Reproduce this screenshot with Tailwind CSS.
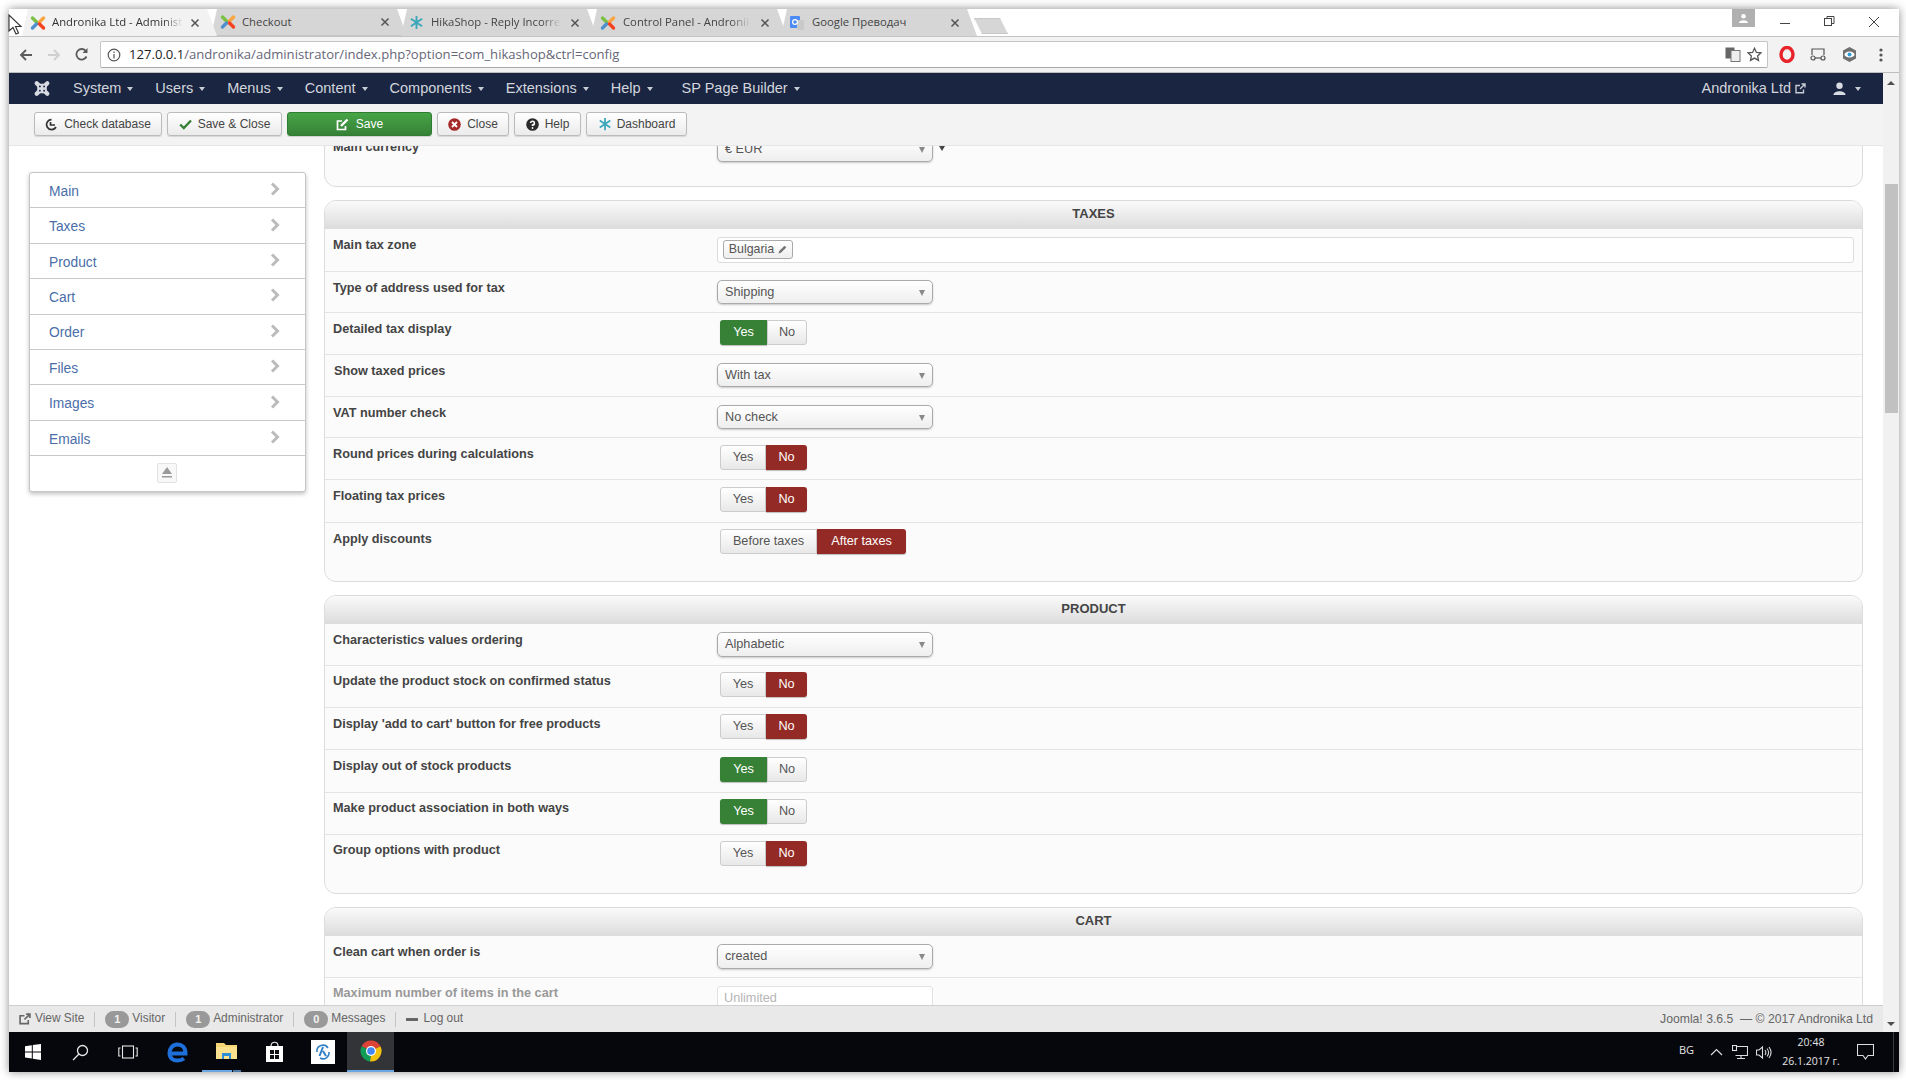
<!DOCTYPE html>
<html lang="en">
  <head>
    <meta charset="UTF-8" />
    <title>Andronika Ltd - Administration</title>
    <script src="https://cdn.jsdelivr.net/npm/@tailwindcss/browser@4"></script>
  </head>
  <body class="bg-white w-[1906px] h-[1080px] overflow-hidden font-['Liberation_Sans',Arial,sans-serif] text-[#333]">
    <svg class="hidden">
      <symbol id="joomla" viewBox="0 0 16 16">
        <path d="M2.5 3 L6.5 7" stroke="#7ac143" stroke-width="3.4" stroke-linecap="round" fill="none" />
        <path d="M13.5 3 L9.5 7" stroke="#f9a541" stroke-width="3.4" stroke-linecap="round" fill="none" />
        <path d="M2.5 13 L6.5 9" stroke="#5091cd" stroke-width="3.4" stroke-linecap="round" fill="none" />
        <path d="M13.5 13 L9.5 9" stroke="#f44321" stroke-width="3.4" stroke-linecap="round" fill="none" />
      </symbol>
      <symbol id="hika" viewBox="0 0 16 16">
        <path d="M8 1 V15 M2 4 L14 12 M14 4 L2 12" stroke="#3aa6b9" stroke-width="2" fill="none" />
      </symbol>
      <symbol id="chev" viewBox="0 0 10 14">
        <path d="M2 1.5 L7.5 7 L2 12.5" stroke="#bbb" stroke-width="3" fill="none" />
      </symbol>
      <symbol id="x" viewBox="0 0 10 10">
        <path d="M1.5 1.5 L8.5 8.5 M8.5 1.5 L1.5 8.5" stroke="#555" stroke-width="1.5" fill="none" />
      </symbol>
    </svg>

    <!-- mouse cursor -->
    <svg class="absolute left-[8px] top-[14px] z-20" width="15" height="21" viewBox="0 0 15 21">
      <path d="M1 1 V17 L5 13.5 L8 20 L10.5 19 L7.5 12.5 H13 Z" fill="#fff" stroke="#333" stroke-width="1.1" />
    </svg>

    <div class="absolute left-[9px] top-[9px] w-[1890px] h-[1063px] flex flex-col bg-white shadow-[0_0_9px_rgba(0,0,0,0.45)]">
      <!-- tab strip -->
      <div class="h-[28px] shrink-0 flex items-stretch relative border-b border-[#c4c4c4] text-[11.3px] font-['Open_Sans',sans-serif] text-[#444]">
        <div class="flex pl-[13px] items-stretch">
          <div class="relative z-10 w-[195px] bg-[#f2f2f2] flex items-center pl-[8px] pr-[17px] gap-[6px] [clip-path:polygon(6px_0,185px_0,195px_100%,0_100%)]">
            <svg class="w-[16px] h-[16px] shrink-0"><use href="#joomla" /></svg>
            <span class="w-[131px] overflow-hidden whitespace-nowrap text-[#333] [mask-image:linear-gradient(to_right,#000_85%,transparent)]">Andronika Ltd - Administration</span>
            <svg class="w-[10px] h-[10px] ml-auto shrink-0"><use href="#x" /></svg>
          </div>
          <div class="-ml-[6px] w-[196px] bg-[#d6d6d6] flex items-center pl-[9px] pr-[17px] gap-[6px] border-b border-[#c4c4c4] [clip-path:polygon(6px_0,186px_0,196px_100%,0_100%)]">
            <svg class="w-[16px] h-[16px] shrink-0"><use href="#joomla" /></svg>
            <span class="overflow-hidden whitespace-nowrap">Checkout</span>
            <svg class="w-[10px] h-[10px] ml-auto shrink-0"><use href="#x" /></svg>
          </div>
          <div class="-ml-[6px] w-[196px] bg-[#d6d6d6] flex items-center pl-[8px] pr-[17px] gap-[7px] [clip-path:polygon(6px_0,186px_0,196px_100%,0_100%)]">
            <svg class="w-[15px] h-[15px] shrink-0"><use href="#hika" /></svg>
            <span class="w-[130px] overflow-hidden whitespace-nowrap [mask-image:linear-gradient(to_right,#000_85%,transparent)]">HikaShop - Reply Incorrect</span>
            <svg class="w-[10px] h-[10px] ml-auto shrink-0"><use href="#x" /></svg>
          </div>
          <div class="-ml-[6px] w-[196px] bg-[#d6d6d6] flex items-center pl-[9px] pr-[17px] gap-[7px] [clip-path:polygon(6px_0,186px_0,196px_100%,0_100%)]">
            <svg class="w-[16px] h-[16px] shrink-0"><use href="#joomla" /></svg>
            <span class="w-[127px] overflow-hidden whitespace-nowrap [mask-image:linear-gradient(to_right,#000_85%,transparent)]">Control Panel - Andronika</span>
            <svg class="w-[10px] h-[10px] ml-auto shrink-0"><use href="#x" /></svg>
          </div>
          <div class="-ml-[6px] w-[196px] bg-[#d6d6d6] flex items-center pl-[8px] pr-[17px] gap-[7px] [clip-path:polygon(6px_0,186px_0,196px_100%,0_100%)]">
            <svg class="w-[16px] h-[16px] shrink-0" viewBox="0 0 16 16">
              <rect x="1" y="1" width="10" height="12" rx="1" fill="#4c8bf5" />
              <rect x="8" y="5" width="7" height="10" rx="1" fill="#c9c9c9" />
              <circle cx="6" cy="7" r="2.4" fill="none" stroke="#fff" stroke-width="1.2" />
            </svg>
            <span class="overflow-hidden whitespace-nowrap">Google Преводач</span>
            <svg class="w-[10px] h-[10px] ml-auto shrink-0"><use href="#x" /></svg>
          </div>
          <div class="-ml-[3px] mt-[9px] w-[34px] h-[16px] bg-[#d6d6d6] border border-[#c8c8c8] [clip-path:polygon(0_0,26px_0,34px_100%,8px_100%)]"></div>
        </div>
        <div class="ml-auto flex items-start mr-[2px]">
          <div class="w-[23px] h-[18px] bg-[#b0b0b0] mr-[7px] flex items-center justify-center">
            <svg width="11" height="11" viewBox="0 0 12 12"><circle cx="6" cy="3.5" r="2.5" fill="#fff" /><path d="M1 11 C1 7 11 7 11 11 Z" fill="#fff" /></svg>
          </div>
          <div class="flex items-center h-[26px]">
            <svg class="w-[45px]" height="12" viewBox="0 0 45 12"><path d="M18 7.5 H28" stroke="#444" stroke-width="1" /></svg>
            <svg class="w-[45px]" height="12" viewBox="0 0 45 12" fill="none" stroke="#444"><rect x="17.5" y="2.5" width="7" height="7" /><path d="M20 2.5 V0.5 H27 V7.5 H24.5" /></svg>
            <svg class="w-[45px]" height="12" viewBox="0 0 45 12"><path d="M17 1 L27 11 M27 1 L17 11" stroke="#444" stroke-width="1" /></svg>
          </div>
        </div>
      </div>

      <!-- address bar -->
      <div class="h-[36px] shrink-0 bg-[#f2f2f2] flex items-start border-b border-[#bdbdbd] pt-[4px]">
        <div class="w-[91px] h-[27px] flex items-center shrink-0">
          <svg class="ml-[10px]" width="14" height="14" viewBox="0 0 14 14" fill="none" stroke="#5a5a5a" stroke-width="1.8"><path d="M13 7 H2 M7 2 L2 7 L7 12" /></svg>
          <svg class="ml-[14px]" width="14" height="14" viewBox="0 0 14 14" fill="none" stroke="#cfcfcf" stroke-width="1.8"><path d="M1 7 H12 M7 2 L12 7 L7 12" /></svg>
          <svg class="ml-[13px]" width="15" height="15" viewBox="0 0 15 15" fill="none" stroke="#5a5a5a" stroke-width="1.8"><path d="M12.5 9.5 A5.3 5.3 0 1 1 12 4.2" /><path d="M13.5 1 V6 H8.5 Z" fill="#5a5a5a" stroke="none" /></svg>
        </div>
        <div class="w-[1668px] h-[27px] bg-white border border-[#c4c4c4] border-b-[#a9a9a9] rounded-[2px] flex items-center shrink-0">
          <svg class="ml-[6px]" width="14" height="14" viewBox="0 0 14 14" fill="none" stroke="#555" stroke-width="1.2"><circle cx="7" cy="7" r="5.8" /><path d="M7 6 V10.5 M7 3.4 V5" /></svg>
          <span class="ml-[8px] text-[13.1px] font-['Open_Sans',sans-serif] text-[#667] whitespace-nowrap"><span class="text-[#222]">127.0.0.1</span>/andronika/administrator/index.php?option=com_hikashop&amp;ctrl=config</span>
          <svg class="ml-auto" width="16" height="15" viewBox="0 0 16 15"><rect x="0.5" y="0.5" width="9" height="11" fill="#666" /><rect x="6" y="3.5" width="9" height="11" fill="#eee" stroke="#777" /></svg>
          <svg class="ml-[6px] mr-[5px]" width="15" height="15" viewBox="0 0 15 15" fill="none" stroke="#555" stroke-width="1.3"><path d="M7.5 1.3 L9.4 5.4 L13.9 5.9 L10.6 8.9 L11.5 13.4 L7.5 11.1 L3.5 13.4 L4.4 8.9 L1.1 5.9 L5.6 5.4 Z" /></svg>
        </div>
        <div class="flex-1 h-[27px] flex items-center">
          <svg class="ml-[11px]" width="16" height="17" viewBox="0 0 16 17"><ellipse cx="8" cy="8.5" rx="6" ry="7" fill="none" stroke="#e8232a" stroke-width="3.4" /></svg>
          <svg class="ml-[15px]" width="16" height="13" viewBox="0 0 16 13" fill="none" stroke="#555" stroke-width="1.2"><path d="M2 7 V1 H14 V7" /><circle cx="3" cy="10" r="2" /><circle cx="13" cy="10" r="2" /><path d="M5 10 H11" /></svg>
          <svg class="ml-[15px]" width="17" height="17" viewBox="0 0 17 17"><path d="M8.5 1 L15 4.5 V12.5 L8.5 16 L2 12.5 V4.5 Z" fill="#6f6f6f" /><ellipse cx="8.5" cy="8.5" rx="5" ry="3" fill="#fff" /><circle cx="8.5" cy="8.5" r="2" fill="#2d9cdb" /></svg>
          <svg class="ml-[21px]" width="4" height="14" viewBox="0 0 4 14" fill="#555"><circle cx="2" cy="2" r="1.6" /><circle cx="2" cy="7" r="1.6" /><circle cx="2" cy="12" r="1.6" /></svg>
        </div>
      </div>

      <div class="flex-1 min-h-0 flex">
        <div class="flex-1 min-w-0 flex flex-col">
          <!-- joomla nav -->
          <nav class="h-[31px] shrink-0 bg-[#1a2542] text-[#d2d5dc] text-[14.5px] flex items-center pr-[22px] whitespace-nowrap">
            <svg class="ml-[24px] mr-[22px]" width="18" height="17" viewBox="0 0 16 16">
              <path d="M3 3 L13 13 M13 3 L3 13" stroke="#d8dbe2" stroke-width="4" stroke-linecap="round" fill="none" />
              <rect x="3.5" y="3.5" width="9" height="9" fill="#d8dbe2" />
              <circle cx="6" cy="6" r="0.9" fill="#1a2542" /><circle cx="10" cy="6" r="0.9" fill="#1a2542" /><circle cx="6" cy="10" r="0.9" fill="#1a2542" /><circle cx="10" cy="10" r="0.9" fill="#1a2542" />
            </svg>
            <div class="flex items-center gap-[22px]">
              <span class="flex items-center gap-[6px]">System<i class="w-0 h-0 border-x-[3.5px] border-t-[4px] border-x-transparent border-t-[#c8ccd4]"></i></span>
              <span class="flex items-center gap-[6px]">Users<i class="w-0 h-0 border-x-[3.5px] border-t-[4px] border-x-transparent border-t-[#c8ccd4]"></i></span>
              <span class="flex items-center gap-[6px]">Menus<i class="w-0 h-0 border-x-[3.5px] border-t-[4px] border-x-transparent border-t-[#c8ccd4]"></i></span>
              <span class="flex items-center gap-[6px]">Content<i class="w-0 h-0 border-x-[3.5px] border-t-[4px] border-x-transparent border-t-[#c8ccd4]"></i></span>
              <span class="flex items-center gap-[6px]">Components<i class="w-0 h-0 border-x-[3.5px] border-t-[4px] border-x-transparent border-t-[#c8ccd4]"></i></span>
              <span class="flex items-center gap-[6px]">Extensions<i class="w-0 h-0 border-x-[3.5px] border-t-[4px] border-x-transparent border-t-[#c8ccd4]"></i></span>
              <span class="flex items-center gap-[6px]">Help<i class="w-0 h-0 border-x-[3.5px] border-t-[4px] border-x-transparent border-t-[#c8ccd4]"></i></span>
              <span class="ml-[7px] flex items-center gap-[6px]">SP Page Builder<i class="w-0 h-0 border-x-[3.5px] border-t-[4px] border-x-transparent border-t-[#c8ccd4]"></i></span>
            </div>
            <span class="ml-auto">Andronika Ltd</span>
            <svg class="ml-[4px]" width="11" height="11" viewBox="0 0 11 11" fill="none" stroke="#c8ccd4" stroke-width="1.4"><path d="M8.5 6.5 V9.8 H1 V2.5 H5 M5 6 L10 1 M6.5 1 H10 V4.5" /></svg>
            <svg class="ml-[27px]" width="13" height="13" viewBox="0 0 13 13" fill="#d8dbe2"><circle cx="6.5" cy="3.8" r="3.2" /><path d="M0.5 13 C0.5 8 12.5 8 12.5 13 Z" /></svg>
            <i class="ml-[9px] w-0 h-0 border-x-[3.5px] border-t-[4px] border-x-transparent border-t-[#c8ccd4]"></i>
          </nav>

          <!-- toolbar -->
          <div class="h-[42px] shrink-0 bg-[#f3f3f3] border-b border-[#e6e6e6] flex items-start pt-[8px] pl-[25px] gap-[5px] text-[12px] text-[#444]">
            <button class="h-[24px] w-[128px] flex items-center justify-center gap-[6px] rounded-[3px] border border-[#bbb] bg-gradient-to-b from-white to-[#ebebeb] shadow-[0_1px_1px_rgba(0,0,0,0.12)]">
              <svg width="13" height="13" viewBox="0 0 13 13" fill="none" stroke="#333" stroke-width="1.7"><path d="M11 9 A5 5 0 1 1 6.5 1.6" /><path d="M5.5 4 V7 H10" /></svg>Check database
            </button>
            <button class="h-[24px] w-[115px] flex items-center justify-center gap-[6px] rounded-[3px] border border-[#bbb] bg-gradient-to-b from-white to-[#ebebeb] shadow-[0_1px_1px_rgba(0,0,0,0.12)]">
              <svg width="13" height="11" viewBox="0 0 13 11" fill="none" stroke="#378137" stroke-width="2.4"><path d="M1.2 5.5 L4.8 9 L12 1.5" /></svg>Save &amp; Close
            </button>
            <button class="h-[24px] w-[145px] flex items-center justify-center gap-[7px] rounded-[3px] border border-[#2f7d32] bg-gradient-to-b from-[#46a546] to-[#378137] text-white shadow-[0_1px_1px_rgba(0,0,0,0.15)]">
              <svg width="13" height="13" viewBox="0 0 13 13" fill="none" stroke="#fff" stroke-width="1.7"><path d="M9.5 8 V11.5 H1.5 V3 H6" /><path d="M5 8 L11.5 1.5" stroke-width="2.4" /></svg>Save
            </button>
            <button class="h-[24px] w-[72px] flex items-center justify-center gap-[6px] rounded-[3px] border border-[#bbb] bg-gradient-to-b from-white to-[#ebebeb] shadow-[0_1px_1px_rgba(0,0,0,0.12)]">
              <svg width="13" height="13" viewBox="0 0 13 13"><circle cx="6.5" cy="6.5" r="6.3" fill="#a52a2a" /><path d="M4 4 L9 9 M9 4 L4 9" stroke="#fff" stroke-width="1.8" /></svg>Close
            </button>
            <button class="h-[24px] w-[67px] flex items-center justify-center gap-[6px] rounded-[3px] border border-[#bbb] bg-gradient-to-b from-white to-[#ebebeb] shadow-[0_1px_1px_rgba(0,0,0,0.12)]">
              <svg width="13" height="13" viewBox="0 0 13 13"><circle cx="6.5" cy="6.5" r="6.3" fill="#2b2b2b" /><path d="M4.6 5 A1.9 1.9 0 1 1 6.5 7 V8" fill="none" stroke="#fff" stroke-width="1.5" /><circle cx="6.5" cy="10" r="0.9" fill="#fff" /></svg>Help
            </button>
            <button class="h-[24px] w-[101px] flex items-center justify-center gap-[5px] rounded-[3px] border border-[#bbb] bg-gradient-to-b from-white to-[#ebebeb] shadow-[0_1px_1px_rgba(0,0,0,0.12)]">
              <svg class="w-[14px] h-[14px]"><use href="#hika" /></svg>Dashboard
            </button>
          </div>

          <!-- main -->
          <div class="flex-1 min-h-0 overflow-hidden flex pl-[20px] pr-[20px] bg-white">
            <aside class="w-[277px] shrink-0 mt-[26px] self-start bg-white border border-[#c6c6c6] rounded-[3px] shadow-[0_2px_4px_rgba(0,0,0,0.25)] text-[13.8px] text-[#4a6ea8]">
              <div class="h-[35.4px] border-b border-[#c9c9c9] flex items-center pt-[4px] pl-[19px] pr-[25px] justify-between">Main<svg class="w-[10px] h-[14px] -mt-[6px]"><use href="#chev" /></svg></div>
              <div class="h-[35.4px] border-b border-[#c9c9c9] flex items-center pt-[4px] pl-[19px] pr-[25px] justify-between">Taxes<svg class="w-[10px] h-[14px] -mt-[6px]"><use href="#chev" /></svg></div>
              <div class="h-[35.4px] border-b border-[#c9c9c9] flex items-center pt-[4px] pl-[19px] pr-[25px] justify-between">Product<svg class="w-[10px] h-[14px] -mt-[6px]"><use href="#chev" /></svg></div>
              <div class="h-[35.4px] border-b border-[#c9c9c9] flex items-center pt-[4px] pl-[19px] pr-[25px] justify-between">Cart<svg class="w-[10px] h-[14px] -mt-[6px]"><use href="#chev" /></svg></div>
              <div class="h-[35.4px] border-b border-[#c9c9c9] flex items-center pt-[4px] pl-[19px] pr-[25px] justify-between">Order<svg class="w-[10px] h-[14px] -mt-[6px]"><use href="#chev" /></svg></div>
              <div class="h-[35.4px] border-b border-[#c9c9c9] flex items-center pt-[4px] pl-[19px] pr-[25px] justify-between">Files<svg class="w-[10px] h-[14px] -mt-[6px]"><use href="#chev" /></svg></div>
              <div class="h-[35.4px] border-b border-[#c9c9c9] flex items-center pt-[4px] pl-[19px] pr-[25px] justify-between">Images<svg class="w-[10px] h-[14px] -mt-[6px]"><use href="#chev" /></svg></div>
              <div class="h-[35.4px] border-b border-[#c9c9c9] flex items-center pt-[4px] pl-[19px] pr-[25px] justify-between">Emails<svg class="w-[10px] h-[14px] -mt-[6px]"><use href="#chev" /></svg></div>
              <div class="h-[35px] flex items-center justify-center pb-[2px] pr-[2px]">
                <div class="w-[20px] h-[20px] bg-[#f8f8f8] border border-[#e2e2e2] rounded-[2px] flex items-center justify-center">
                  <svg width="10" height="11" viewBox="0 0 10 11" fill="#9a9a9a"><path d="M5 0 L10 7 H0 Z" /><rect y="9" width="10" height="1.5" /></svg>
                </div>
              </div>
            </aside>

            <div class="flex-1 min-w-0 ml-[18px] -mt-[60px] flex flex-col gap-[13px] text-[12.7px]">
              <!-- main panel, scrolled away -->
              <section class="h-[101px] shrink-0 rounded-[12px] border border-[#dcdcdc] bg-[#fbfbfb] flex pt-[51px]">
                <div class="w-[392px] pl-[8px] leading-[18px] font-bold text-[#444]">Main currency</div>
                <div class="w-[216px] h-[24px] rounded-[5px] border border-[#aaa] bg-gradient-to-b from-white to-[#eee] shadow-[0_1px_2px_rgba(0,0,0,0.2)] flex items-center px-[7px] text-[#555] justify-between">€ EUR<i class="w-0 h-0 border-x-[3.5px] border-t-[6px] border-x-transparent border-t-[#888]"></i></div>
                <i class="ml-[6px] mt-[8px] w-0 h-0 border-x-[3px] border-t-[5px] border-x-transparent border-t-[#444]"></i>
              </section>

              <!-- taxes -->
              <section class="h-[382px] shrink-0 rounded-[12px] border border-[#dcdcdc] bg-[#fbfbfb] flex flex-col overflow-hidden">
                <h3 class="h-[28px] shrink-0 pb-[2px] bg-gradient-to-b from-[#fafafa] to-[#dcdcdc] flex items-center justify-center font-bold text-[13px] text-[#444]">TAXES</h3>
                <div class="h-[42px] flex">
                  <div class="w-[392px] pl-[8px] pt-[7px] leading-[18px] font-bold text-[#444]">Main tax zone</div>
                  <div class="mt-[8px] w-[1137px] h-[26px] bg-white border border-[#ddd] rounded-[3px] pl-[5px] pb-[1px] flex items-center">
                    <span class="h-[19px] w-[70px] border border-[#aaa] rounded-[3px] bg-gradient-to-b from-white to-[#eee] flex items-center justify-center gap-[4px] text-[12.4px] text-[#555]">Bulgaria<svg width="9" height="9" viewBox="0 0 9 9"><path d="M0.5 8.5 L1.2 6 L6.5 0.7 L8.3 2.5 L3 7.8 Z" fill="#777" /></svg></span>
                  </div>
                </div>
                <div class="h-[41px] flex border-t border-[#e4e4e4]">
                  <div class="w-[392px] pl-[8px] pt-[7px] leading-[18px] font-bold text-[#444]">Type of address used for tax</div>
                  <div class="mt-[8px] w-[216px] h-[24px] rounded-[5px] border border-[#aaa] bg-gradient-to-b from-white to-[#eee] shadow-[0_1px_2px_rgba(0,0,0,0.2)] flex items-center px-[7px] pt-[1px] text-[#555] justify-between">Shipping<i class="w-0 h-0 border-x-[3.5px] border-t-[6px] border-x-transparent border-t-[#888]"></i></div>
                </div>
                <div class="h-[42px] flex border-t border-[#e4e4e4]">
                  <div class="w-[392px] pl-[8px] pt-[7px] leading-[18px] font-bold text-[#444]">Detailed tax display</div>
                  <div class="ml-[3px] mt-[7px] h-[25px] flex">
                    <span class="w-[47px] flex items-center justify-center rounded-l-[3px] bg-[#378137] text-white shadow-[0_1px_1px_rgba(0,0,0,0.25)]">Yes</span>
                    <span class="w-[40px] flex items-center justify-center rounded-r-[3px] border border-[#ccc] bg-gradient-to-b from-white to-[#e8e8e8] text-[#555]">No</span>
                  </div>
                </div>
                <div class="h-[42px] flex border-t border-[#e4e4e4]">
                  <div class="w-[392px] pl-[9px] pt-[7px] leading-[18px] font-bold text-[#444]">Show taxed prices</div>
                  <div class="mt-[8px] w-[216px] h-[24px] rounded-[5px] border border-[#aaa] bg-gradient-to-b from-white to-[#eee] shadow-[0_1px_2px_rgba(0,0,0,0.2)] flex items-center px-[7px] pt-[1px] text-[#555] justify-between">With tax<i class="w-0 h-0 border-x-[3.5px] border-t-[6px] border-x-transparent border-t-[#888]"></i></div>
                </div>
                <div class="h-[41px] flex border-t border-[#e4e4e4]">
                  <div class="w-[392px] pl-[8px] pt-[7px] leading-[18px] font-bold text-[#444]">VAT number check</div>
                  <div class="mt-[8px] w-[216px] h-[24px] rounded-[5px] border border-[#aaa] bg-gradient-to-b from-white to-[#eee] shadow-[0_1px_2px_rgba(0,0,0,0.2)] flex items-center px-[7px] pt-[1px] text-[#555] justify-between">No check<i class="w-0 h-0 border-x-[3.5px] border-t-[6px] border-x-transparent border-t-[#888]"></i></div>
                </div>
                <div class="h-[42px] flex border-t border-[#e4e4e4]">
                  <div class="w-[392px] pl-[8px] pt-[7px] leading-[18px] font-bold text-[#444]">Round prices during calculations</div>
                  <div class="ml-[3px] mt-[7px] h-[25px] flex">
                    <span class="w-[46px] flex items-center justify-center rounded-l-[3px] border border-[#ccc] bg-gradient-to-b from-white to-[#e8e8e8] text-[#555]">Yes</span>
                    <span class="w-[41px] flex items-center justify-center rounded-r-[3px] bg-[#942a25] text-white shadow-[0_1px_1px_rgba(0,0,0,0.25)]">No</span>
                  </div>
                </div>
                <div class="h-[43px] flex border-t border-[#e4e4e4]">
                  <div class="w-[392px] pl-[8px] pt-[7px] leading-[18px] font-bold text-[#444]">Floating tax prices</div>
                  <div class="ml-[3px] mt-[7px] h-[25px] flex">
                    <span class="w-[46px] flex items-center justify-center rounded-l-[3px] border border-[#ccc] bg-gradient-to-b from-white to-[#e8e8e8] text-[#555]">Yes</span>
                    <span class="w-[41px] flex items-center justify-center rounded-r-[3px] bg-[#942a25] text-white shadow-[0_1px_1px_rgba(0,0,0,0.25)]">No</span>
                  </div>
                </div>
                <div class="flex-1 flex border-t border-[#e4e4e4]">
                  <div class="w-[392px] pl-[8px] pt-[7px] leading-[18px] font-bold text-[#444]">Apply discounts</div>
                  <div class="ml-[3px] mt-[6px] h-[25px] flex">
                    <span class="w-[97px] flex items-center justify-center rounded-l-[3px] border border-[#ccc] bg-gradient-to-b from-white to-[#e8e8e8] text-[#555]">Before taxes</span>
                    <span class="w-[89px] flex items-center justify-center rounded-r-[3px] bg-[#942a25] text-white shadow-[0_1px_1px_rgba(0,0,0,0.25)]">After taxes</span>
                  </div>
                </div>
              </section>

              <!-- product -->
              <section class="h-[299px] shrink-0 rounded-[12px] border border-[#dcdcdc] bg-[#fbfbfb] flex flex-col overflow-hidden">
                <h3 class="h-[28px] shrink-0 pb-[2px] bg-gradient-to-b from-[#fafafa] to-[#dcdcdc] flex items-center justify-center font-bold text-[13px] text-[#444]">PRODUCT</h3>
                <div class="h-[41px] flex">
                  <div class="w-[392px] pl-[8px] pt-[7px] leading-[18px] font-bold text-[#444]">Characteristics values ordering</div>
                  <div class="mt-[8px] w-[216px] h-[25px] rounded-[5px] border border-[#aaa] bg-gradient-to-b from-white to-[#eee] shadow-[0_1px_2px_rgba(0,0,0,0.2)] flex items-center px-[7px] text-[#555] justify-between">Alphabetic<i class="w-0 h-0 border-x-[3.5px] border-t-[6px] border-x-transparent border-t-[#888]"></i></div>
                </div>
                <div class="h-[42px] flex border-t border-[#e4e4e4]">
                  <div class="w-[392px] pl-[8px] pt-[6px] leading-[18px] font-bold text-[#444]">Update the product stock on confirmed status</div>
                  <div class="ml-[3px] mt-[6px] h-[25px] flex">
                    <span class="w-[46px] flex items-center justify-center rounded-l-[3px] border border-[#ccc] bg-gradient-to-b from-white to-[#e8e8e8] text-[#555]">Yes</span>
                    <span class="w-[41px] flex items-center justify-center rounded-r-[3px] bg-[#942a25] text-white shadow-[0_1px_1px_rgba(0,0,0,0.25)]">No</span>
                  </div>
                </div>
                <div class="h-[42px] flex border-t border-[#e4e4e4]">
                  <div class="w-[392px] pl-[8px] pt-[7px] leading-[18px] font-bold text-[#444]">Display 'add to cart' button for free products</div>
                  <div class="ml-[3px] mt-[6px] h-[25px] flex">
                    <span class="w-[46px] flex items-center justify-center rounded-l-[3px] border border-[#ccc] bg-gradient-to-b from-white to-[#e8e8e8] text-[#555]">Yes</span>
                    <span class="w-[41px] flex items-center justify-center rounded-r-[3px] bg-[#942a25] text-white shadow-[0_1px_1px_rgba(0,0,0,0.25)]">No</span>
                  </div>
                </div>
                <div class="h-[43px] flex border-t border-[#e4e4e4]">
                  <div class="w-[392px] pl-[8px] pt-[7px] leading-[18px] font-bold text-[#444]">Display out of stock products</div>
                  <div class="ml-[3px] mt-[7px] h-[25px] flex">
                    <span class="w-[47px] flex items-center justify-center rounded-l-[3px] bg-[#378137] text-white shadow-[0_1px_1px_rgba(0,0,0,0.25)]">Yes</span>
                    <span class="w-[40px] flex items-center justify-center rounded-r-[3px] border border-[#ccc] bg-gradient-to-b from-white to-[#e8e8e8] text-[#555]">No</span>
                  </div>
                </div>
                <div class="h-[42px] flex border-t border-[#e4e4e4]">
                  <div class="w-[392px] pl-[8px] pt-[6px] leading-[18px] font-bold text-[#444]">Make product association in both ways</div>
                  <div class="ml-[3px] mt-[6px] h-[25px] flex">
                    <span class="w-[47px] flex items-center justify-center rounded-l-[3px] bg-[#378137] text-white shadow-[0_1px_1px_rgba(0,0,0,0.25)]">Yes</span>
                    <span class="w-[40px] flex items-center justify-center rounded-r-[3px] border border-[#ccc] bg-gradient-to-b from-white to-[#e8e8e8] text-[#555]">No</span>
                  </div>
                </div>
                <div class="flex-1 flex border-t border-[#e4e4e4]">
                  <div class="w-[392px] pl-[8px] pt-[6px] leading-[18px] font-bold text-[#444]">Group options with product</div>
                  <div class="ml-[3px] mt-[6px] h-[25px] flex">
                    <span class="w-[46px] flex items-center justify-center rounded-l-[3px] border border-[#ccc] bg-gradient-to-b from-white to-[#e8e8e8] text-[#555]">Yes</span>
                    <span class="w-[41px] flex items-center justify-center rounded-r-[3px] bg-[#942a25] text-white shadow-[0_1px_1px_rgba(0,0,0,0.25)]">No</span>
                  </div>
                </div>
              </section>

              <!-- cart -->
              <section class="h-[300px] shrink-0 rounded-[12px] border border-[#dcdcdc] bg-[#fbfbfb] flex flex-col overflow-hidden">
                <h3 class="h-[28px] shrink-0 pb-[3px] bg-gradient-to-b from-[#fafafa] to-[#dcdcdc] flex items-center justify-center font-bold text-[13px] text-[#444]">CART</h3>
                <div class="h-[41px] flex">
                  <div class="w-[392px] pl-[8px] pt-[7px] leading-[18px] font-bold text-[#444]">Clean cart when order is</div>
                  <div class="mt-[8px] w-[216px] h-[25px] rounded-[5px] border border-[#aaa] bg-gradient-to-b from-white to-[#eee] shadow-[0_1px_2px_rgba(0,0,0,0.2)] flex items-center px-[7px] text-[#555] justify-between">created<i class="w-0 h-0 border-x-[3.5px] border-t-[6px] border-x-transparent border-t-[#888]"></i></div>
                </div>
                <div class="h-[42px] flex border-t border-[#e4e4e4]">
                  <div class="w-[392px] pl-[8px] pt-[6px] leading-[18px] font-bold text-[#999]">Maximum number of items in the cart</div>
                  <div class="mt-[8px] w-[216px] h-[26px] bg-white border border-[#e2e2e2] rounded-[3px] flex items-center px-[6px] text-[#b5b5b5]">Unlimited</div>
                </div>
              </section>
            </div>
          </div>

          <!-- status bar -->
          <div class="h-[27px] shrink-0 bg-[#e9e9e9] border-t border-[#cfcfcf] flex items-center pl-[10px] pr-[10px] text-[11.9px] text-[#666] whitespace-nowrap">
            <svg width="12" height="12" viewBox="0 0 11 11" fill="none" stroke="#666" stroke-width="1.5"><path d="M8.5 6.5 V9.8 H1 V2.5 H5 M5 6 L10 1 M6.5 1 H10 V4.5" /></svg>
            <span class="ml-[4px]">View Site</span>
            <i class="mx-[10px] w-px h-[15px] bg-[#c4c4c4]"></i>
            <span class="w-[24px] h-[17px] rounded-full bg-[#999] text-[#f2f2f2] text-[11px] font-bold flex items-center justify-center">1</span>
            <span class="ml-[3px]">Visitor</span>
            <i class="mx-[10px] w-px h-[15px] bg-[#c4c4c4]"></i>
            <span class="w-[24px] h-[17px] rounded-full bg-[#999] text-[#f2f2f2] text-[11px] font-bold flex items-center justify-center">1</span>
            <span class="ml-[3px]">Administrator</span>
            <i class="mx-[10px] w-px h-[15px] bg-[#c4c4c4]"></i>
            <span class="w-[24px] h-[17px] rounded-full bg-[#999] text-[#f2f2f2] text-[11px] font-bold flex items-center justify-center">0</span>
            <span class="ml-[3px]">Messages</span>
            <i class="mx-[10px] w-px h-[15px] bg-[#c4c4c4]"></i>
            <i class="w-[12px] h-[3px] bg-[#666]"></i>
            <span class="ml-[5px]">Log out</span>
            <span class="ml-auto text-[12.2px]">Joomla! 3.6.5 &nbsp;— © 2017 Andronika Ltd</span>
          </div>
        </div>

        <!-- scrollbar -->
        <div class="w-[16px] shrink-0 bg-[#f1f1f1] flex flex-col items-center">
          <i class="mt-[8px] w-0 h-0 border-x-[4px] border-b-[4px] border-x-transparent border-b-[#505050]"></i>
          <div class="mt-[99px] w-[13px] h-[229px] bg-[#c1c1c1]"></div>
          <i class="mt-auto mb-[6px] w-0 h-0 border-x-[4px] border-t-[4px] border-x-transparent border-t-[#505050]"></i>
        </div>
      </div>

      <!-- taskbar -->
      <div class="h-[40px] shrink-0 bg-[#05070d] flex items-stretch text-white font-['Open_Sans',sans-serif]">
        <div class="w-[47px] flex items-center justify-center">
          <svg width="16" height="16" viewBox="0 0 16 16" fill="#fff"><path d="M0 2.3 L6.8 1.3 V7.4 H0 Z M7.8 1.1 L16 0 V7.4 H7.8 Z M0 8.4 H6.8 V14.6 L0 13.6 Z M7.8 8.4 H16 V16 L7.8 14.8 Z" /></svg>
        </div>
        <div class="w-[48px] flex items-center justify-center">
          <svg width="17" height="17" viewBox="0 0 17 17" fill="none" stroke="#e8e8e8" stroke-width="1.3"><circle cx="10.5" cy="6.5" r="5" /><path d="M7 10 L1 16" /></svg>
        </div>
        <div class="w-[49px] flex items-center justify-center pr-[2px]">
          <svg width="20" height="14" viewBox="0 0 20 14" fill="none" stroke="#e8e8e8" stroke-width="1.1"><rect x="4.5" y="1" width="11" height="12" /><path d="M2.5 3 H0.8 V11 H2.5 M17.5 3 H19.2 V11 H17.5" /></svg>
        </div>
        <div class="w-[48px] flex items-center justify-center">
          <svg width="21" height="21" viewBox="0 0 21 21" fill="none" stroke="#1e6fd9" stroke-width="4"><path d="M3 11.5 H18.5 C18.5 5.5 15 2.5 10.5 2.5 C5.5 2.5 2.5 6.5 2.5 11 C2.5 16 6 18.5 10.5 18.5 C13 18.5 15 18 17 16.5" /></svg>
        </div>
        <div class="w-[49px] flex flex-col">
          <div class="flex-1 flex items-center justify-center pl-[1px]">
            <svg width="21" height="18" viewBox="0 0 21 18"><path d="M0 1 H8 L10 3 H21 V17 H0 Z" fill="#f4d774" /><rect x="0" y="5" width="21" height="12" fill="#fbe08d" /><path d="M6 17 V11 H15 V17 H13 V14 H8 V17 Z" fill="#2f8fd6" /></svg>
          </div>
          <div class="h-[2px] mx-[1px] flex gap-px"><i class="w-[30px] bg-[#6aa6e0]"></i><i class="w-[8px] bg-[#4d7ba8]"></i></div>
        </div>
        <div class="w-[48px] flex items-center justify-center">
          <svg width="21" height="22" viewBox="0 0 21 22"><path d="M7 5 C7 0 14 0 14 5" fill="none" stroke="#eee" stroke-width="1.2" /><path d="M2 5 H19 V21 H2 Z" fill="#fff" /><path d="M6 9 H10 V13 H6 Z M11 9 H15 V13 H11 Z M6 14 H10 V18 H6 Z M11 14 H15 V18 H11 Z" fill="#111" /></svg>
        </div>
        <div class="w-[49px] flex items-center justify-center">
          <div class="w-[24px] h-[24px] bg-white flex items-center justify-center">
            <svg width="18" height="18" viewBox="0 0 18 18" fill="none" stroke="#2f7fc8" stroke-width="1.6"><path d="M3 9 A6 6 0 0 1 14 5 M15 9 A6 6 0 0 1 6 15" /><path d="M9 4 L5.5 13 M9 8 L12 13" stroke-width="2" /></svg>
          </div>
        </div>
        <div class="w-[47px] bg-[#333437] flex items-center justify-center border-b-2 border-[#6aa6e0]">
          <svg width="22" height="22" viewBox="0 0 22 22">
            <path d="M11 11 L1.6 6.3 A10.5 10.5 0 0 1 20.4 6.3 Z" fill="#db4437" />
            <path d="M11 11 L20.4 6.3 A10.5 10.5 0 0 1 10 21.4 Z" fill="#f4c20d" />
            <path d="M11 11 L10 21.4 A10.5 10.5 0 0 1 1.6 6.3 Z" fill="#0f9d58" />
            <circle cx="11" cy="11" r="5" fill="#fff" /><circle cx="11" cy="11" r="3.8" fill="#4285f4" />
          </svg>
        </div>
        <div class="ml-auto flex items-center text-[#e4e4e4]">
          <span class="text-[11px] -mt-[4px]">BG</span>
          <svg class="ml-[16px]" width="13" height="8" viewBox="0 0 13 8" fill="none" stroke="#ddd" stroke-width="1.2"><path d="M1 7 L6.5 1.5 L12 7" /></svg>
          <svg class="ml-[9px]" width="16" height="15" viewBox="0 0 16 15" fill="none" stroke="#ddd" stroke-width="1.1"><path d="M3.5 1.5 H15.5 V10.5 H3.5 M9 10.5 V13.5 M5 13.5 H13" /><rect x="0.5" y="0.5" width="4" height="5" fill="#05070d" /></svg>
          <svg class="ml-[8px]" width="16" height="15" viewBox="0 0 16 15" fill="none" stroke="#ddd" stroke-width="1.1"><path d="M0.5 5 H3 L6.5 2 V13 L3 10 H0.5 Z M9 5 C10 6.5 10 8.5 9 10 M11 3.5 C13 6 13 9 11 11.5 M13 2 C15.6 5.5 15.6 9.5 13 13" /></svg>
          <div class="ml-[1px] w-[76px] flex flex-col items-center text-[10.5px] leading-[19px] -mt-[1px]">
            <span>20:48</span>
            <span class="whitespace-nowrap">26.1.2017 г.</span>
          </div>
          <svg class="ml-[8px]" width="17" height="16" viewBox="0 0 17 16" fill="none" stroke="#ddd" stroke-width="1.1"><path d="M0.5 0.5 H16.5 V11.5 H11 L8.5 15 L6 11.5 H0.5 Z" /></svg>
          <i class="ml-[19px] mr-[5px] w-px h-full bg-[#3a3a3a]"></i>
        </div>
      </div>
    </div>
  </body>
</html>
